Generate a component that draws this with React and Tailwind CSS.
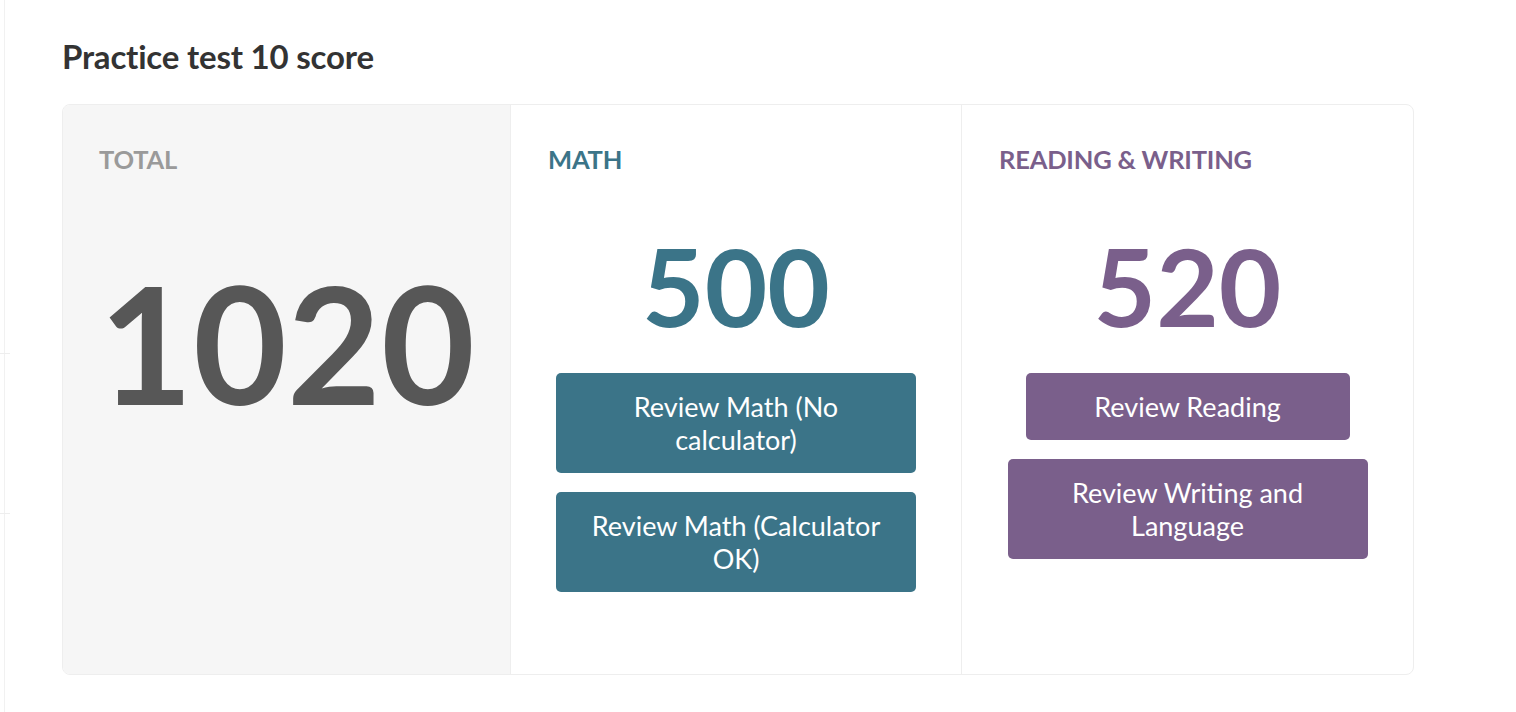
const MATH = '#3b7488';
const RW = '#7a5f8b';

function SectionLabel({ children, color }) {
  return (
    <p className="text-[25.5px] font-bold leading-[30px] tracking-[-0.2px]" style={{ color }}>
      {children}
    </p>
  );
}

function ReviewButton({ children, bg, width }) {
  return (
    <button
      className={`${width} rounded-[5px] py-[17px] px-[30px] text-[27px] leading-[33px] text-white text-center`}
      style={{ backgroundColor: bg }}
    >
      {children}
    </button>
  );
}

export default function App() {
  return (
    <div className="min-h-[712px] bg-white relative font-['Lato','Noto_Sans',sans-serif]">
      {/* faint sidebar edge */}
      <div className="absolute left-[4px] top-0 bottom-0 w-px bg-[#f1f1f1]" />
      <div className="absolute left-0 top-[353px] w-[10px] h-px bg-[#eeeeee]" />
      <div className="absolute left-0 top-[513px] w-[10px] h-px bg-[#eeeeee]" />

      <div className="pl-[62px] pt-[37px] w-[1414px]">
        <h1 className="text-[33px] font-bold leading-[38px] text-[#333333] tracking-[-0.2px]">Practice test 10 score</h1>

        <div className="mt-[29px] grid grid-cols-[447px_451px_452px] h-[571px] rounded-[8px] border border-[#eeeeee] overflow-hidden">
          {/* Total */}
          <div className="bg-[#f6f6f6] pt-[39px] px-[36px]">
            <SectionLabel color="#9a9a9a">TOTAL</SectionLabel>
            <p className="mt-[89px] text-center text-[162px] font-bold leading-[160px] text-[#575757] pr-[14px]">1020</p>
          </div>

          {/* Math */}
          <div className="border-l border-[#eeeeee] pt-[39px] px-[37px] flex flex-col items-center">
            <div className="self-stretch">
              <SectionLabel color={MATH}>MATH</SectionLabel>
            </div>
            <p className="mt-[51px] text-[108px] font-bold leading-[120px]" style={{ color: MATH }}>500</p>
            <div className="mt-[28px] flex flex-col items-center gap-[19px]">
              <ReviewButton bg={MATH} width="w-[360px]">Review Math (No calculator)</ReviewButton>
              <ReviewButton bg={MATH} width="w-[360px]">Review Math (Calculator OK)</ReviewButton>
            </div>
          </div>

          {/* Reading & Writing */}
          <div className="border-l border-[#eeeeee] pt-[39px] px-[37px] flex flex-col items-center">
            <div className="self-stretch">
              <SectionLabel color={RW}>READING &amp; WRITING</SectionLabel>
            </div>
            <p className="mt-[51px] text-[108px] font-bold leading-[120px]" style={{ color: RW }}>520</p>
            <div className="mt-[28px] flex flex-col items-center gap-[19px]">
              <ReviewButton bg={RW} width="w-[324px]">Review Reading</ReviewButton>
              <ReviewButton bg={RW} width="w-[360px]">Review Writing and Language</ReviewButton>
            </div>
          </div>
        </div>
      </div>
    </div>
  );
}
